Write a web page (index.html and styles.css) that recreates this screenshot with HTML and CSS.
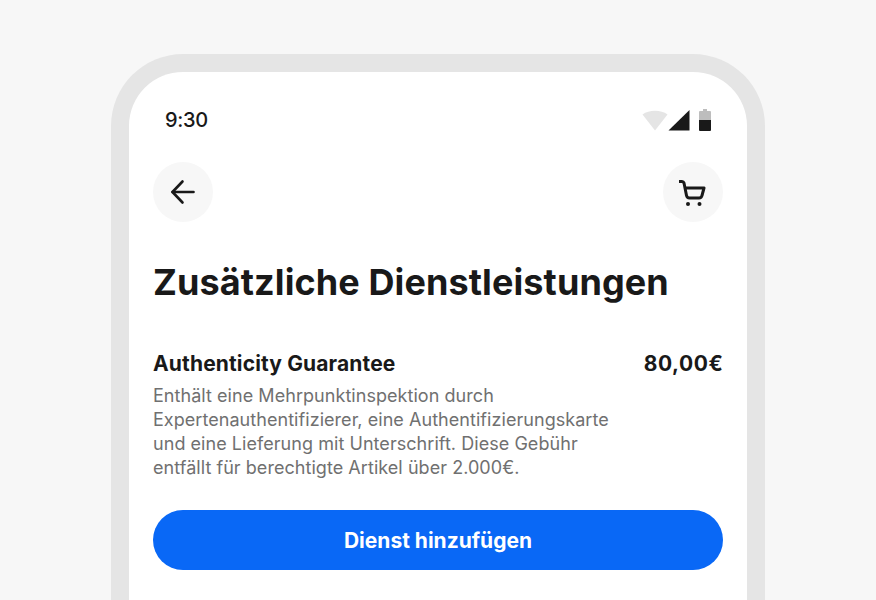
FILE: index.html
```html
<!DOCTYPE html>
<html lang="de">
<head>
    <meta charset="UTF-8">
    <meta name="viewport" content="width=device-width, initial-scale=1.0">
    <title>Zusätzliche Dienstleistungen</title>
    <link rel="stylesheet" href="styles.css">
</head>
<body>
    <div class="phone">
        <div class="screen">
            <div class="status-bar">
                <span class="time">9:30</span>
                <div class="status-icons">
                    <svg width="26" height="22" viewBox="0 0 26 22"><path d="M0.500 5.500 C7 0.500 19 0.500 25.500 5.500 L13 21.500 Z" fill="#e5e5e5"/></svg>
                    <svg width="22" height="22" viewBox="0 0 22 22"><path d="M21.500 1 V21.500 H0.500 Z" fill="#191919"/></svg>
                    <svg class="battery" width="12" height="22" viewBox="0 0 12 22"><path d="M4 0 H8 V2 H11 Q12 2 12 3 V11 H0 V3 Q0 2 1 2 H4 Z" fill="#bdbdbd"/><path d="M0 11 H12 V21 Q12 22 11 22 H1 Q0 22 0 21 Z" fill="#191919"/></svg>
                </div>
            </div>

            <div class="nav">
                <button class="round-btn">
                    <svg width="28" height="28" viewBox="0 0 28 28" fill="none" stroke="#191919" stroke-width="2.600" stroke-linecap="round" stroke-linejoin="round"><path d="M3.500 14 H24.500"/><path d="M13.500 3.500 L3.500 14 L13.500 24.500"/></svg>
                </button>
                <button class="round-btn">
                    <svg width="28" height="28" viewBox="0 0 28 28" fill="none" stroke="#191919" stroke-width="3" stroke-linecap="round" stroke-linejoin="round"><path d="M0.500 3.500 H3 Q4.500 3.500 5 5 L7.500 17.500 Q8 20 10.500 20 H20 Q22.500 20 23 17.500 L25 10 H6"/><circle cx="9" cy="26" r="2" fill="#191919" stroke="none"/><circle cx="20.500" cy="26" r="2" fill="#191919" stroke="none"/></svg>
                </button>
            </div>

            <h1 class="title">Zusätzliche Dienstleistungen</h1>

            <div class="service">
                <div class="service-head">
                    <span class="service-name">Authenticity Guarantee</span>
                    <span class="service-price">80,00€</span>
                </div>
                <p class="service-text">Enthält eine Mehrpunktinspektion durch Expertenauthentifizierer, eine Authentifizierungskarte und eine Lieferung mit Unterschrift. Diese Gebühr entfällt für berechtigte Artikel über 2.000€.</p>
            </div>

            <button class="add-btn">Dienst hinzufügen</button>
        </div>
    </div>
</body>
</html>
```
FILE: styles.css
```css
html, body {
    height: 600px;
    overflow: hidden;
}

body {
    margin: 0;
    padding-top: 54px;
    box-sizing: border-box;
    background-color: #f7f7f7;
    font-family: Inter, "Liberation Sans", sans-serif;
    color: #191919;
}

.phone {
    width: 654px;
    height: 546px;
    margin: 0 auto;
    padding: 18px 18px 0;
    box-sizing: border-box;
    background-color: #e5e5e5;
    border-radius: 72px 72px 0 0;
}

.screen {
    height: 100%;
    padding: 0 24px;
    background-color: #fff;
    border-radius: 54px 54px 0 0;
}

.status-bar {
    display: flex;
    justify-content: space-between;
    align-items: center;
    height: 22px;
    padding: 37px 12px 0;
}

.time {
    font-size: 20px;
    font-weight: 500;
    letter-spacing: -0.3px;
}

.status-icons {
    display: flex;
    align-items: center;
}

.status-icons svg {
    display: block;
}

.battery {
    margin-left: 9px;
}

.nav {
    display: flex;
    justify-content: space-between;
    margin-top: 31px;
}

.round-btn {
    display: flex;
    align-items: center;
    justify-content: center;
    width: 60px;
    height: 60px;
    padding: 0;
    border: none;
    border-radius: 50%;
    background-color: #f7f7f7;
}

.title {
    margin: 37px 0 0;
    font-size: 36px;
    line-height: 46px;
    font-weight: 700;
    letter-spacing: 0.1px;
}

.service {
    margin-top: 45px;
}

.service-head {
    display: flex;
    justify-content: space-between;
    font-size: 21px;
    line-height: 28px;
    font-weight: 700;
}

.service-name {
    letter-spacing: 0.14px;
}

.service-price {
    margin-right: -0.6px;
    letter-spacing: 0.6px;
}

.service-text {
    width: 470px;
    margin: 6px 0 0;
    font-size: 18px;
    line-height: 24px;
    letter-spacing: 0.05px;
    color: #707070;
}

.add-btn {
    display: block;
    width: 100%;
    height: 60px;
    margin-top: 30px;
    border: none;
    border-radius: 30px;
    background-color: #0968f6;
    color: #fff;
    font-family: inherit;
    font-size: 21px;
    font-weight: 700;
}
```
